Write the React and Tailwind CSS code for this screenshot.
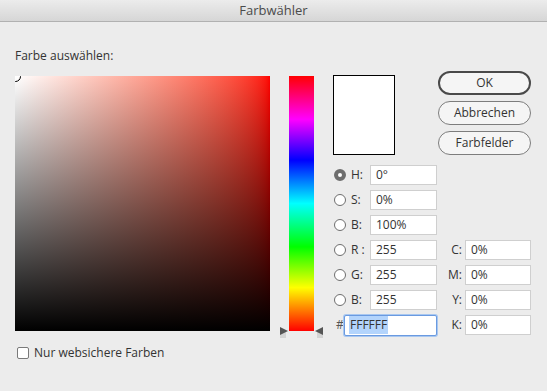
import React from 'react';

const rows = [
  { key: 'H', label: 'H:', value: '0°', selected: true },
  { key: 'S', label: 'S:', value: '0%' },
  { key: 'Bv', label: 'B:', value: '100%' },
  { key: 'R', label: 'R :', value: '255', cmyk: ['C:', '0%'] },
  { key: 'G', label: 'G:', value: '255', cmyk: ['M:', '0%'] },
  { key: 'Bl', label: 'B:', value: '255', cmyk: ['Y:', '0%'] },
];

const Radio = ({ selected }) => (
  <span
    className={`block w-[12px] h-[12px] rounded-full bg-white ${
      selected ? 'border-[4px] border-[#6e6e6e]' : 'border border-[#6e6e6e]'
    }`}
  />
);

const Field = ({ value, className = 'w-[67px]' }) => (
  <div
    className={`${className} h-[20px] bg-white border border-[#cfcfcf] flex items-center pl-[5px] text-[12px] text-[#333]`}
  >
    {value}
  </div>
);

const Marker = ({ flip }) => (
  <svg width="9" height="11" viewBox="0 0 9 11" className={flip ? '-scale-x-100' : ''}>
    <rect x="0" y="3" width="6" height="8" fill="#d4d4d4" />
    <path d="M0 0 L8 4 L0 8 Z" fill="#555" />
  </svg>
);

const App = () => {
  return (
    <div className="w-[547px] h-[391px] bg-[#ececec] text-[#333] font-['Open_Sans',sans-serif] overflow-hidden">
      {/* Title bar */}
      <div className="h-[22px] border-b border-[#b1b1b1] bg-gradient-to-b from-[#ececec] to-[#d6d6d6] flex items-center justify-center text-[13px] text-[#4b4b4b]">
        Farbwähler
      </div>

      <div className="pl-[15px] pt-[26px]">
        <div className="text-[12px] leading-[16px]">Farbe auswählen:</div>

        <div className="flex items-start mt-[12px]">
          {/* Saturation / brightness field */}
          <div className="flex flex-col">
            <div className="relative w-[255px] h-[255px] overflow-hidden bg-gradient-to-r from-white to-[#ff0000]">
              <div className="absolute inset-0 bg-gradient-to-b from-transparent to-black" />
              <div className="absolute -left-[5px] -top-[5px] w-[11px] h-[11px] rounded-full border border-black" />
            </div>
            <div className="flex items-center mt-[14px] ml-[2px] h-[16px]">
              <span className="w-[12px] h-[12px] rounded-[2px] border border-[#7a7a7a] bg-white" />
              <span className="ml-[5px] text-[12px]">Nur websichere Farben</span>
            </div>
          </div>

          {/* Hue slider */}
          <div className="relative ml-[10px] w-[42px] h-[262px]">
            <div className="mx-[9px] w-[25px] h-[255px] bg-[linear-gradient(to_bottom,#ff0000_0%,#ff00ff_17%,#0000ff_33%,#00ffff_50%,#00ff00_67%,#ffff00_83%,#ff0000_100%)]" />
            <div className="absolute left-0 top-[251px]">
              <Marker />
            </div>
            <div className="absolute right-[-1px] top-[251px]">
              <Marker flip />
            </div>
          </div>

          {/* Right panel */}
          <div className="ml-[11px] w-[198px]">
            <div className="flex items-start">
              <div className="-mt-px w-[62px] h-[80px] border border-black bg-white" />
              <div className="ml-[43px] -mt-[5px] flex flex-col gap-[6px]">
                <button className="w-[93px] h-[24px] rounded-full border-2 border-[#4a4a4a] bg-[#f5f5f5] text-[12px] text-[#333]">
                  OK
                </button>
                <button className="w-[93px] h-[24px] rounded-full border border-[#7d7d7d] bg-[#f5f5f5] text-[12px] text-[#333]">
                  Abbrechen
                </button>
                <button className="w-[93px] h-[24px] rounded-full border border-[#7d7d7d] bg-[#f5f5f5] text-[12px] text-[#333]">
                  Farbfelder
                </button>
              </div>
            </div>

            <div className="mt-[10px] flex flex-col gap-[5px]">
              {rows.map((r) => (
                <div key={r.key} className="flex items-center h-[20px]">
                  <div className="w-[37px] flex items-center pl-px">
                    <Radio selected={r.selected} />
                    <span className="ml-[5px] text-[12px]">{r.label}</span>
                  </div>
                  <Field value={r.value} />
                  {r.cmyk && (
                    <>
                      <span className="w-[28px] text-right pr-[3px] text-[12px]">{r.cmyk[0]}</span>
                      <Field value={r.cmyk[1]} className="w-[66px]" />
                    </>
                  )}
                </div>
              ))}
              <div className="flex items-center h-[20px]">
                <span className="w-[11px] pl-[3px] text-[12px] text-[#555]">#</span>
                <div className="w-[93px] h-[21px] bg-white border border-[#6a9ae0] rounded-[2px] shadow-[0_0_0_1px_#a8c7f0] flex items-center pl-[4px] text-[12px]">
                  <span className="bg-[#b3d4fc] px-px">FFFFFF</span>
                </div>
                <span className="w-[28px] text-right pr-[3px] text-[12px]">K:</span>
                <Field value="0%" className="w-[66px]" />
              </div>
            </div>
          </div>
        </div>
      </div>
    </div>
  );
};

export default App;
